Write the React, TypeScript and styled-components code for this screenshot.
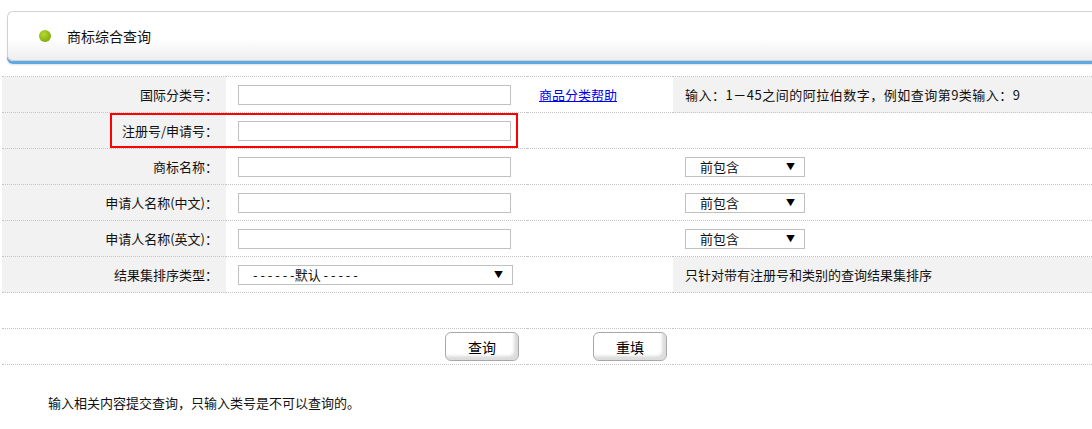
import React from 'react';
import styled, { createGlobalStyle } from 'styled-components';

const GlobalStyle = createGlobalStyle`
  html, body {
    margin: 0;
    padding: 0;
    background: #fff;
    overflow-x: hidden;
  }
  body {
    font-family: "Noto Sans CJK SC", "Liberation Sans", sans-serif;
    font-size: 13px;
    color: #111;
  }
`;

const Page = styled.div`
  width: 1092px;
`;

const TitleBar = styled.div`
  margin: 11px 0 0 7px;
  height: 48px;
  display: flex;
  align-items: center;
  padding-left: 31px;
  gap: 16px;
  border: 1px solid #d2d2d2;
  border-right: none;
  border-radius: 6px 0 0 6px;
  background: linear-gradient(#ffffff 55%, #eeeeee);
  box-shadow: 0 3px 0 #5faae6, 0 4px 2px rgba(0, 0, 0, 0.12);
  font-size: 14px;
  color: #111;
`;

const Dot = styled.span`
  width: 12px;
  height: 12px;
  border-radius: 50%;
  background: radial-gradient(circle at 40% 35%, #b5d931, #86ad0e 70%, #6f930a);
`;

const FormArea = styled.div`
  position: relative;
  margin: 15px 0 0 2px;
`;

const Table = styled.table`
  width: 100%;
  border-collapse: collapse;
  table-layout: fixed;
`;

const Row = styled.tr`
  height: 36px;
  border-top: 1px dotted #c4c4c4;
`;

const LabelCell = styled.td`
  background: #f2f2f2;
  text-align: right;
  padding: 0 8px 0 0;
  white-space: nowrap;
`;

const Cell = styled.td<{ $shaded?: boolean }>`
  padding: 0 0 0 12px;
  background: ${p => (p.$shaded ? '#f2f2f2' : 'transparent')};
  white-space: nowrap;
`;

const TextInput = styled.input`
  display: block;
  box-sizing: border-box;
  width: 273px;
  height: 20px;
  border: 1px solid #c0c0c0;
  padding: 0 4px;
  font: inherit;
  outline: none;
`;

const SelectBox = styled.div<{ $width: number; $indent: number }>`
  box-sizing: border-box;
  width: ${p => p.$width}px;
  height: 20px;
  border: 1px solid #c0c0c0;
  background: #fff;
  display: flex;
  align-items: center;
  justify-content: space-between;
  padding: 0 9px 0 ${p => p.$indent}px;
  font-size: 13px;
  line-height: 18px;
`;

const Arrow = styled.span`
  font-size: 9px;
  color: #000;
`;

const HelpLink = styled.a`
  color: #0000ee;
  text-decoration: underline;
  font-size: 13px;
`;

const Spacer = styled.tr`
  height: 36px;
  border-top: 1px dotted #c4c4c4;
`;

const ButtonRow = styled.tr`
  height: 36px;
  border-top: 1px dotted #c4c4c4;
  border-bottom: 1px dotted #c4c4c4;
`;

const ButtonBar = styled.div`
  display: flex;
  justify-content: center;
  gap: 74px;
  padding-left: 18px;
`;

const Button = styled.button`
  width: 74px;
  height: 29px;
  border: 1px solid #a8a8a8;
  border-radius: 6px;
  background: #fff;
  box-shadow: inset -4px -4px 3px #dcdcdc, inset 2px 2px 1px #ffffff;
  font-family: inherit;
  font-size: 14px;
  color: #000;
  padding: 0;
`;

const Highlight = styled.div`
  position: absolute;
  left: 108px;
  top: 37px;
  width: 404px;
  height: 31px;
  border: 2px solid #ff0000;
  pointer-events: none;
`;

const HelpText = styled.span`
  letter-spacing: 0.5px;
`;

const Note = styled.p`
  margin: 30px 0 0 48px;
  font-size: 13px;
  line-height: 16px;
`;

const nameLabels = ['商标名称：', '申请人名称(中文)：', '申请人名称(英文)：'];

export default function App() {
  return (
    <Page>
      <GlobalStyle />
      <TitleBar>
        <Dot />
        <span>商标综合查询</span>
      </TitleBar>

      <FormArea>
        <Table>
          <colgroup>
            <col style={{ width: 224 }} />
            <col style={{ width: 301 }} />
            <col style={{ width: 146 }} />
            <col />
          </colgroup>
          <tbody>
            <Row>
              <LabelCell>国际分类号：</LabelCell>
              <Cell><TextInput /></Cell>
              <Cell><HelpLink href="#">商品分类帮助</HelpLink></Cell>
              <Cell $shaded>
                <HelpText>输入：1－45之间的阿拉伯数字，例如查询第9类输入：9</HelpText>
              </Cell>
            </Row>
            <Row>
              <LabelCell>注册号/申请号：</LabelCell>
              <Cell><TextInput /></Cell>
              <Cell />
              <Cell />
            </Row>
            {nameLabels.map(label => (
              <Row key={label}>
                <LabelCell>{label}</LabelCell>
                <Cell><TextInput /></Cell>
                <Cell />
                <Cell>
                  <SelectBox $width={120} $indent={14}>
                    <span>前包含</span>
                    <Arrow>▼</Arrow>
                  </SelectBox>
                </Cell>
              </Row>
            ))}
            <Row>
              <LabelCell>结果集排序类型：</LabelCell>
              <Cell>
                <SelectBox $width={275} $indent={14}>
                  <span>- - - - - -默认 - - - - -</span>
                  <Arrow>▼</Arrow>
                </SelectBox>
              </Cell>
              <Cell />
              <Cell $shaded>只针对带有注册号和类别的查询结果集排序</Cell>
            </Row>
            <Spacer>
              <td colSpan={4} />
            </Spacer>
            <ButtonRow>
              <td colSpan={4}>
                <ButtonBar>
                  <Button type="button">查询</Button>
                  <Button type="button">重填</Button>
                </ButtonBar>
              </td>
            </ButtonRow>
          </tbody>
        </Table>
        <Highlight />
      </FormArea>

      <Note>输入相关内容提交查询，只输入类号是不可以查询的。</Note>
    </Page>
  );
}
